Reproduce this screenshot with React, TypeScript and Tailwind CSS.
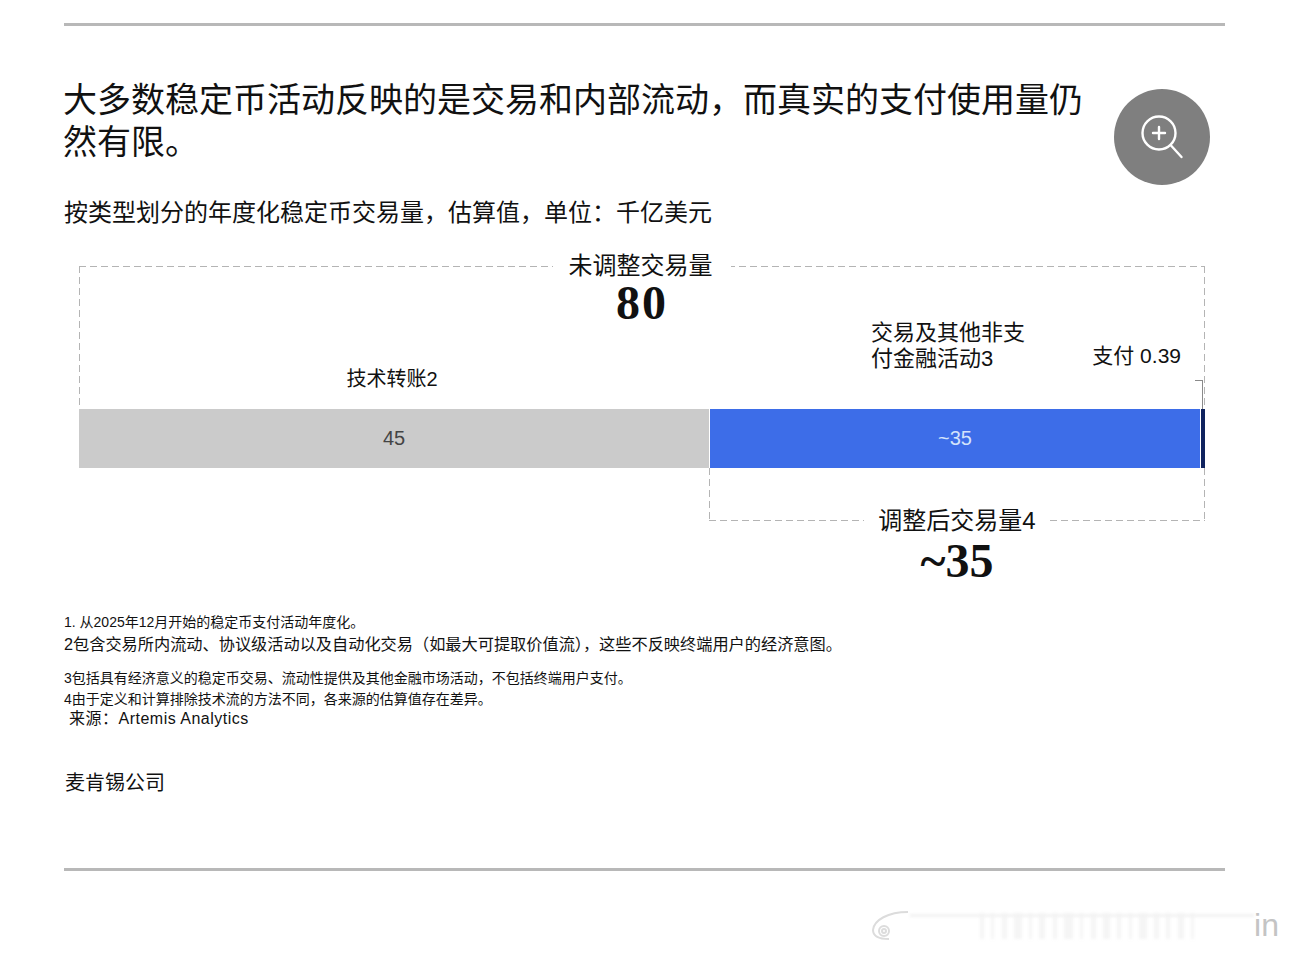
const sans = "font-['Liberation_Sans','Noto_Sans_CJK_SC',sans-serif]";
const serif = "font-['Liberation_Serif','Noto_Serif_CJK_SC',serif]";

const hDash = "h-px bg-[repeating-linear-gradient(90deg,#b4b4b4_0_7px,transparent_7px_11px)]";
const vDash = "w-px bg-[repeating-linear-gradient(180deg,#b4b4b4_0_7px,transparent_7px_11px)]";

const notes = [
  { text: "1. 从2025年12月开始的稳定币支付活动年度化。", cls: "h-[22px] text-[14px] leading-[22px]" },
  { text: "2包含交易所内流动、协议级活动以及自动化交易（如最大可提取价值流），这些不反映终端用户的经济意图。", cls: "h-[22px] text-[16.2px] leading-[22px]" },
  { text: "3包括具有经济意义的稳定币交易、流动性提供及其他金融市场活动，不包括终端用户支付。", cls: "mt-[12px] h-[22px] text-[14px] leading-[22px]" },
  { text: "4由于定义和计算排除技术流的方法不同，各来源的估算值存在差异。", cls: "h-[20px] text-[14px] leading-[20px]" },
  { text: "来源：Artemis Analytics", cls: "ml-[5px] h-[20px] text-[16px] leading-[20px] tracking-[0.5px]" },
];

const stripes = [4, 3, 5, 8, 3, 6, 4, 9, 3, 5, 7, 4, 3, 8, 5, 4, 6, 3];

function ZoomButton() {
  return (
    <div className="mt-[10px] mr-[15px] flex h-[96px] w-[96px] shrink-0 items-center justify-center rounded-full bg-[#7f7f7f]">
      <svg width="48" height="48" viewBox="0 0 48 48" fill="none" stroke="white" strokeLinecap="round">
        <circle cx="21" cy="20" r="16.5" strokeWidth="2.4" />
        <path d="M21 14v12M15 20h12" strokeWidth="2.4" />
        <path d="M33 32.5L43.5 44" strokeWidth="2.4" />
      </svg>
    </div>
  );
}

function Watermark() {
  return (
    <div className="absolute right-[10px] bottom-[12px] flex h-[36px] w-[409px] items-end">
      <svg width="40" height="36" viewBox="0 0 40 36" fill="none" stroke="#dcdcdc" strokeWidth="2" className="shrink-0 blur-[0.4px]">
        <path d="M38 5C18 5 4 13 3 23c0 6 6 9 16 9" />
        <circle cx="14" cy="24" r="5" />
        <circle cx="14" cy="24" r="2" />
      </svg>
      <div className="relative mb-[4px] flex h-[26px] flex-1 items-end justify-between pr-[60px] pl-[70px] blur-[1.5px]">
        <div className="absolute inset-x-0 top-[1px] h-[3px] bg-[#f2f2f2]" />
        {stripes.map((w, i) => (
          <span key={i} className="h-full bg-[#f5f5f5]" style={{ width: w }} />
        ))}
      </div>
      <span className="text-[32px] leading-[36px] font-light text-[#c4c4c4]">in</span>
    </div>
  );
}

export default function App() {
  return (
    <div className={`relative h-[955px] w-[1289px] overflow-hidden bg-white px-[64px] pt-[23px] text-[#111] ${sans}`}>
      <div className="h-[3px] w-[1161px] bg-[#b8b8b8]" />

      <div className="mt-[53px] flex justify-between">
        <h1 className="-ml-px w-[1030px] text-[34px] leading-[42px] font-normal text-[#111]">
          大多数稳定币活动反映的是交易和内部流动，而真实的支付使用量仍然有限。
        </h1>
        <ZoomButton />
      </div>

      <p className="mt-[12px] h-[32px] text-[24px] leading-[32px]">按类型划分的年度化稳定币交易量，估算值，单位：千亿美元</p>

      {/* chart */}
      <div className="mt-[37px] ml-[15px] w-[1126px]">
        <div className="relative flex h-[143px] flex-col">
          <div className={`absolute inset-x-0 top-0 ${hDash}`} />
          <div className={`absolute inset-y-0 left-0 ${vDash}`} />
          <div className={`absolute inset-y-0 right-0 ${vDash}`} />

          <div className="relative -mt-[15px] flex h-[65px] flex-col items-center">
            <div className="w-[178px] bg-white pr-[3px] text-center text-[24px] leading-[30px]">未调整交易量</div>
            <div className={`-mt-[3px] text-[48px] leading-[50px] font-bold tracking-[2px] ${serif}`}>80</div>
          </div>

          <div className="relative flex flex-1">
            <div className="flex w-[630px] items-end justify-center pr-[4px] pb-[17px] text-[20px] leading-[26px]">技术转账2</div>
            <div className="flex flex-1 items-end justify-between pr-[24px] pl-[162px]">
              <div className="w-[160px] pb-[37px] text-[22px] leading-[26px]">交易及其他非支付金融活动3</div>
              <div className="pb-[40px] text-[21px] leading-[26px]">支付 0.39</div>
            </div>
          </div>

          <div className="absolute right-[2px] bottom-0 h-[29px] w-[8px] border-t border-r border-[#8a8a8a]" />
        </div>

        <div className="flex h-[59px] text-[20px]">
          <div className="flex w-[630px] items-center justify-center bg-[#cbcbcb] pb-[2px] text-[#444]">45</div>
          <div className="flex w-[491px] items-center justify-center border-l border-white bg-[#3d6de8] pb-[2px] text-[#d3e3fb]">~35</div>
          <div className="ml-px w-[4px] bg-[#10235f]" />
        </div>

        <div className="ml-[630px] w-[496px]">
          <div className="relative flex h-[53px] items-end justify-center">
            <div className={`absolute inset-y-0 left-0 ${vDash}`} />
            <div className={`absolute inset-y-0 right-0 ${vDash}`} />
            <div className={`absolute inset-x-0 bottom-0 ${hDash}`} />
            <div className="relative -mb-[15px] w-[186px] bg-white text-center text-[24px] leading-[30px]">调整后交易量4</div>
          </div>
          <div className={`mt-[13px] h-[54px] text-center text-[48px] leading-[54px] font-bold ${serif}`}>~35</div>
        </div>
      </div>

      <div className="mt-[23px]">
        {notes.map((n) => (
          <p key={n.text} className={n.cls}>{n.text}</p>
        ))}
      </div>

      <p className="mt-[41px] ml-px h-[26px] text-[20px] leading-[26px]">麦肯锡公司</p>

      <div className="mt-[72px] h-[3px] w-[1161px] bg-[#b8b8b8]" />

      <Watermark />
    </div>
  );
}
